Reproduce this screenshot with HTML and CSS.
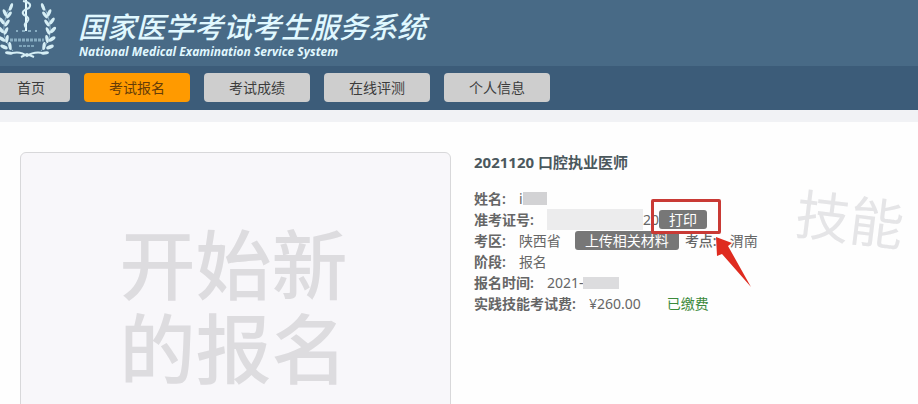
FILE: index.html
```html
<!DOCTYPE html>
<html lang="zh-CN">
<head>
<meta charset="utf-8">
<title>国家医学考试考生服务系统</title>
<link rel="stylesheet" href="styles.css">
</head>
<body>
<header class="banner">
  <svg class="emblem" viewBox="0 0 60 60" aria-hidden="true">
    <defs>
      <g id="branch">
        <path d="M13 3Q-4 33 14 51" fill="none" stroke="#8fb4c9" stroke-width="1"/>
        <g fill="#d5eef5">
          <ellipse cx="12" cy="7" rx="1.6" ry="4" transform="rotate(20 12 7)"/>
          <ellipse cx="6" cy="13" rx="1.7" ry="4" transform="rotate(-25 6 13)"/>
          <ellipse cx="10" cy="15" rx="1.6" ry="4" transform="rotate(38 10 15)"/>
          <ellipse cx="3" cy="21" rx="1.7" ry="4" transform="rotate(-35 3 21)"/>
          <ellipse cx="8" cy="23" rx="1.6" ry="4" transform="rotate(35 8 23)"/>
          <ellipse cx="2" cy="30" rx="1.8" ry="4" transform="rotate(-42 2 30)"/>
          <ellipse cx="7" cy="31" rx="1.6" ry="4" transform="rotate(25 7 31)"/>
          <ellipse cx="3" cy="39" rx="1.8" ry="4" transform="rotate(-55 3 39)"/>
          <ellipse cx="8" cy="39" rx="1.6" ry="4" transform="rotate(10 8 39)"/>
          <ellipse cx="5" cy="47" rx="1.8" ry="4" transform="rotate(-68 5 47)"/>
          <ellipse cx="11" cy="46" rx="1.6" ry="4" transform="rotate(-8 11 46)"/>
          <ellipse cx="10" cy="53" rx="1.6" ry="4" transform="rotate(-82 10 53)"/>
        </g>
      </g>
    </defs>
    <use href="#branch" x="-1"/>
    <use href="#branch" transform="translate(55 0) scale(-1 1)"/>
    <path d="M26 0V31" stroke="#e6fbff" stroke-width="2"/>
    <path d="M23 1Q33 3 29 8Q20 11 24 15Q31 18 27 22Q23 24 26 28" fill="none" stroke="#d5eef5" stroke-width="2"/>
    <path d="M16 31h2M22 31h3M28 31h3M35 31h2" stroke="#88adc2" stroke-width="2"/>
    <path d="M10 40h34" stroke="#88adc2" stroke-width="3" stroke-dasharray="3 1"/>
    <path d="M19 46h16" stroke="#7da3b9" stroke-width="2" stroke-dasharray="3 1"/>
    <path d="M12 53Q21 51 27 56Q34 51 43 53M21 57L27 54L34 57" fill="none" stroke="#d5eef5" stroke-width="2"/>
  </svg>
  <div class="brand">
    <h1 class="brand-name">国家医学考试考生服务系统</h1>
    <p class="brand-sub">National Medical Examination Service System</p>
  </div>
</header>
<nav class="menu">
  <a class="tab tab-home" href="#">首页</a>
  <a class="tab tab-active" href="#">考试报名</a>
  <a class="tab" href="#">考试成绩</a>
  <a class="tab" href="#">在线评测</a>
  <a class="tab" href="#">个人信息</a>
</nav>
<main class="content">
  <a class="start-card" href="#">开始新<br>的报名</a>
  <section class="details">
    <h2 class="exam-title">2021120 口腔执业医师</h2>
    <dl class="fields">
      <div class="row"><dt>姓名:</dt><dd>i<span class="mask mask-name"></span></dd></div>
      <div class="row"><dt>准考证号:</dt><dd><span class="mask mask-ticket"></span>20<button class="action" type="button">打印</button></dd></div>
      <div class="row"><dt>考区:</dt><dd>陕西省</dd><dd class="upload"><button class="action" type="button">上传相关材料</button></dd><dt class="site">考点:</dt><dd>渭南</dd></div>
      <div class="row"><dt>阶段:</dt><dd>报名</dd></div>
      <div class="row"><dt>报名时间:</dt><dd>2021-<span class="mask mask-date"></span></dd></div>
      <div class="row"><dt>实践技能考试费:</dt><dd>¥260.00</dd><dd class="paid">已缴费</dd></div>
    </dl>
    <div class="highlight"></div>
    <svg class="arrow" viewBox="0 0 38 52" aria-hidden="true"><path d="M2 1L18 7L14 10L37 51L8 18L3 20Z" fill="#df2b1f"/></svg>
    <div class="watermark">技能</div>
  </section>
</main>
</body>
</html>
```
FILE: styles.css
```css
* { box-sizing: border-box; }
body {
  margin: 0;
  height: 100vh;
  overflow: hidden;
  background: #fefefe;
  color: #666;
  font: 14px/21px "Noto Sans", "Noto Sans CJK SC", sans-serif;
}
h1, h2, p, dl, dd { margin: 0; }
a { color: inherit; text-decoration: none; }

.banner {
  display: flex;
  gap: 18px;
  height: 66px;
  background: #486a86;
  color: #e0f8ff;
}
.emblem { width: 60px; height: 60px; }
.brand { padding-top: 9px; white-space: nowrap; }
.brand-name { font-size: 29px; line-height: 36px; font-weight: 500; font-style: italic; }
.brand-sub { padding-left: 1px; font: italic 700 12px/14px "Open Sans", sans-serif; }

.menu {
  display: flex;
  gap: 14px;
  height: 44px;
  padding-top: 7px;
  background: #3c5c79;
}
.tab {
  width: 106px;
  height: 29px;
  border-radius: 4px;
  background: #cecece;
  color: #3c3c3c;
  line-height: 29px;
  text-align: center;
}
.tab-home { width: 70px; padding-right: 8px; border-radius: 0 4px 4px 0; }
.tab-active { background: #ff9a00; color: #653c08; }

.content {
  display: flex;
  gap: 23px;
  padding: 30px 20px;
  border-top: 12px solid #f1f2f5;
}
.start-card {
  flex: 0 0 431px;
  padding: 70px 4px 70px 0;
  border: 1px solid #d8d8da;
  border-radius: 6px;
  background: #f8f7fa;
  color: #dddcdf;
  font-size: 76px;
  font-weight: 500;
  line-height: 84px;
  text-align: center;
}
.details { position: relative; flex: 1; white-space: nowrap; }
.exam-title { margin-bottom: 15px; color: #4b585d; font-size: 15px; line-height: 21px; }
.row { display: flex; height: 21px; }
.row dd { display: flex; align-items: center; }
dt { margin-right: 13px; color: #666; font-weight: 600; }
.mask { background: #d2d2d4; }
.mask-name { width: 24px; height: 13px; }
.mask-ticket { width: 96px; height: 21px; background: #ececed; }
.mask-date { width: 36px; height: 12px; background: #dcdcde; }
.action {
  height: 19px;
  padding: 0 10px;
  border: 0;
  border-radius: 3px;
  background: #777;
  color: #fff;
  font: inherit;
  line-height: 19px;
}
.upload { margin: 0 6px 0 14px; }
.row .site { font-weight: 500; }
.paid { margin-left: 26px; color: #3c8a3c; }
.highlight {
  position: absolute;
  top: 47px;
  left: 177px;
  width: 70px;
  height: 35px;
  border: 3px solid #c93a35;
  border-radius: 2px;
}
.arrow { position: absolute; top: 84px; left: 240px; width: 38px; height: 52px; }
.watermark {
  position: absolute;
  top: 34px;
  right: -6px;
  color: #e5e5e7;
  font-size: 54px;
  line-height: 66px;
  transform: rotate(7deg);
}
```
